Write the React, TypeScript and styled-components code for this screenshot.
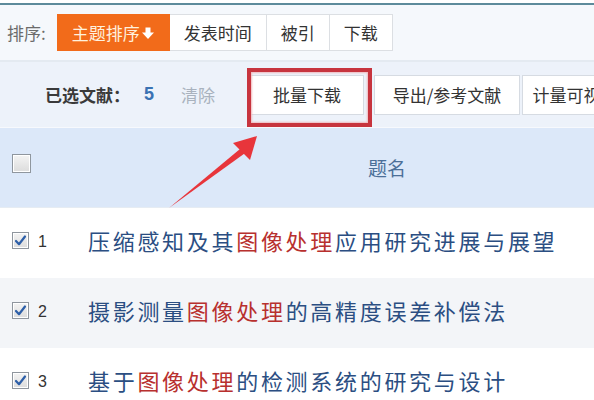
import React from "react";
import styled, { createGlobalStyle } from "styled-components";

const GlobalStyle = createGlobalStyle`
  html, body { margin: 0; padding: 0; background: #ffffff; }
  body { font-family: "Noto Sans CJK SC", "Noto Sans", sans-serif; }
  * { box-sizing: border-box; }
`;

const Page = styled.div`
  position: relative;
  width: 594px;
  height: 400px;
  overflow: hidden;
  background: #ffffff;
  padding-top: 3px;
`;

const SortBar = styled.div`
  display: flex;
  align-items: center;
  height: 59px;
  padding: 0 0 0 7px;
  background: #f5f8fc;
  border-top: 2px solid #5d8b9b;
  border-bottom: 2px solid #e4eaf1;
`;

const SortLabel = styled.span`
  font-size: 17px;
  color: #6b6b6b;
  margin-right: 11px;
`;

const SortButton = styled.span<{ $active?: boolean }>`
  display: flex;
  align-items: center;
  height: 37px;
  padding: 0 14px;
  font-size: 17px;
  color: ${(p) => (p.$active ? "#fff1de" : "#333")};
  background: ${(p) => (p.$active ? "#f26b1a" : "#ffffff")};
  border: 1px solid ${(p) => (p.$active ? "#f26b1a" : "#dcdfe3")};
  border-left-width: ${(p) => (p.$active ? "1px" : "0")};
`;

const Toolbar = styled.div`
  display: flex;
  align-items: center;
  height: 66px;
  padding-left: 45px;
  background: #edf2fa;
  border-bottom: 1px solid #f7f9fd;
  white-space: nowrap;
  & > * { flex: none; }
`;

const SelLabel = styled.span`
  font-size: 17px;
  font-weight: 700;
  color: #3a3a3a;
`;

const SelCount = styled.span`
  font-family: "Liberation Sans", Arial, sans-serif;
  font-size: 18px;
  font-weight: 700;
  color: #3a72b3;
  margin-left: 14px;
`;

const ClearLink = styled.span`
  font-size: 17px;
  color: #a9b2be;
  margin-left: 27px;
  margin-right: 35px;
`;

const ActionButton = styled.span<{ $w: number; $gap: number }>`
  display: flex;
  align-items: center;
  justify-content: center;
  width: ${(p) => p.$w}px;
  height: 40px;
  margin-right: ${(p) => p.$gap}px;
  font-size: 17px;
  color: #333;
  background: #ffffff;
  border: 1px solid #d6dbe2;
`;

const HeaderRow = styled.div`
  display: flex;
  align-items: center;
  height: 80px;
  padding: 0 0 8px 12px;
  background: #dce8f9;
  border-bottom: 1px solid #e6ecf3;
`;

const HeaderTitle = styled.span`
  font-size: 19px;
  color: #4b6f98;
  margin-left: 337px;
  padding-top: 8px;
`;

const Row = styled.div<{ $alt?: boolean }>`
  display: flex;
  align-items: center;
  height: 70px;
  padding: 0 0 6px 12px;
  background: ${(p) => (p.$alt ? "#f3f5f8" : "#ffffff")};
  line-height: 1;
`;

const Num = styled.span`
  font-family: "Liberation Sans", Arial, sans-serif;
  font-size: 16px;
  color: #333;
  width: 59px;
  padding-left: 9px;
  padding-top: 4px;
`;

const Title = styled.span`
  font-size: 22px;
  letter-spacing: 2.7px;
  color: #2b4e82;
  white-space: nowrap;
`;

const Hit = styled.span`
  color: #b8302e;
`;

const Box = styled.span<{ $big?: boolean }>`
  display: inline-flex;
  align-items: center;
  justify-content: center;
  flex: none;
  width: ${(p) => (p.$big ? 19 : 17)}px;
  height: ${(p) => (p.$big ? 19 : 17)}px;
  border: 1px solid #8f969e;
  background: linear-gradient(#f4f4f4, #dcdcdc);
  box-shadow: inset 0 0 0 1px #ffffff;
`;

const Highlight = styled.div`
  position: absolute;
  left: 247px;
  top: 68px;
  width: 125px;
  height: 59px;
  border: 4px solid #c7343e;
  box-shadow: inset 0 0 2px 1px #f0b8bc;
  pointer-events: none;
`;

const ArrowLayer = styled.svg`
  position: absolute;
  left: 0;
  top: 0;
  pointer-events: none;
`;

const Check = () => (
  <svg width="13" height="13" viewBox="0 0 13 13">
    <path d="M2 7 L5 10.2 L11 2.5" fill="none" stroke="#2d5fa8" strokeWidth="2.2" strokeLinejoin="round" strokeLinecap="round" />
  </svg>
);

const DownArrow = () => (
  <svg width="14" height="14" viewBox="0 0 14 14" style={{ marginLeft: 1 }}>
    <path d="M4.5 1.5 H9.5 V6.5 H13 L7 13 L1 6.5 H4.5 Z" fill="#ffffff" />
  </svg>
);

const rows: { n: number; parts: [string, string, string] }[] = [
  { n: 1, parts: ["压缩感知及其", "图像处理", "应用研究进展与展望"] },
  { n: 2, parts: ["摄影测量", "图像处理", "的高精度误差补偿法"] },
  { n: 3, parts: ["基于", "图像处理", "的检测系统的研究与设计"] },
];

export default function App() {
  return (
    <>
      <GlobalStyle />
      <Page>
        <SortBar>
          <SortLabel>排序:</SortLabel>
          <SortButton $active>
            主题排序
            <DownArrow />
          </SortButton>
          <SortButton>发表时间</SortButton>
          <SortButton>被引</SortButton>
          <SortButton>下载</SortButton>
        </SortBar>
        <Toolbar>
          <SelLabel>已选文献：</SelLabel>
          <SelCount>5</SelCount>
          <ClearLink>清除</ClearLink>
          <ActionButton $w={114} $gap={10}>批量下载</ActionButton>
          <ActionButton $w={146} $gap={2}>导出/参考文献</ActionButton>
          <ActionButton $w={140} $gap={0}>计量可视化分析</ActionButton>
        </Toolbar>
        <HeaderRow>
          <Box $big />
          <HeaderTitle>题名</HeaderTitle>
        </HeaderRow>
        {rows.map((r, i) => (
          <Row key={r.n} $alt={i % 2 === 1}>
            <Box>
              <Check />
            </Box>
            <Num>{r.n}</Num>
            <Title>
              {r.parts[0]}
              <Hit>{r.parts[1]}</Hit>
              {r.parts[2]}
            </Title>
          </Row>
        ))}
        <Highlight />
        <ArrowLayer width="594" height="400" viewBox="0 0 594 400">
          <path d="M169 208 L240 149 L244.5 153.5 Z" fill="#e8353b" />
          <path d="M257 136 L233 143 L250 160 Z" fill="#e8353b" />
        </ArrowLayer>
      </Page>
    </>
  );
}
